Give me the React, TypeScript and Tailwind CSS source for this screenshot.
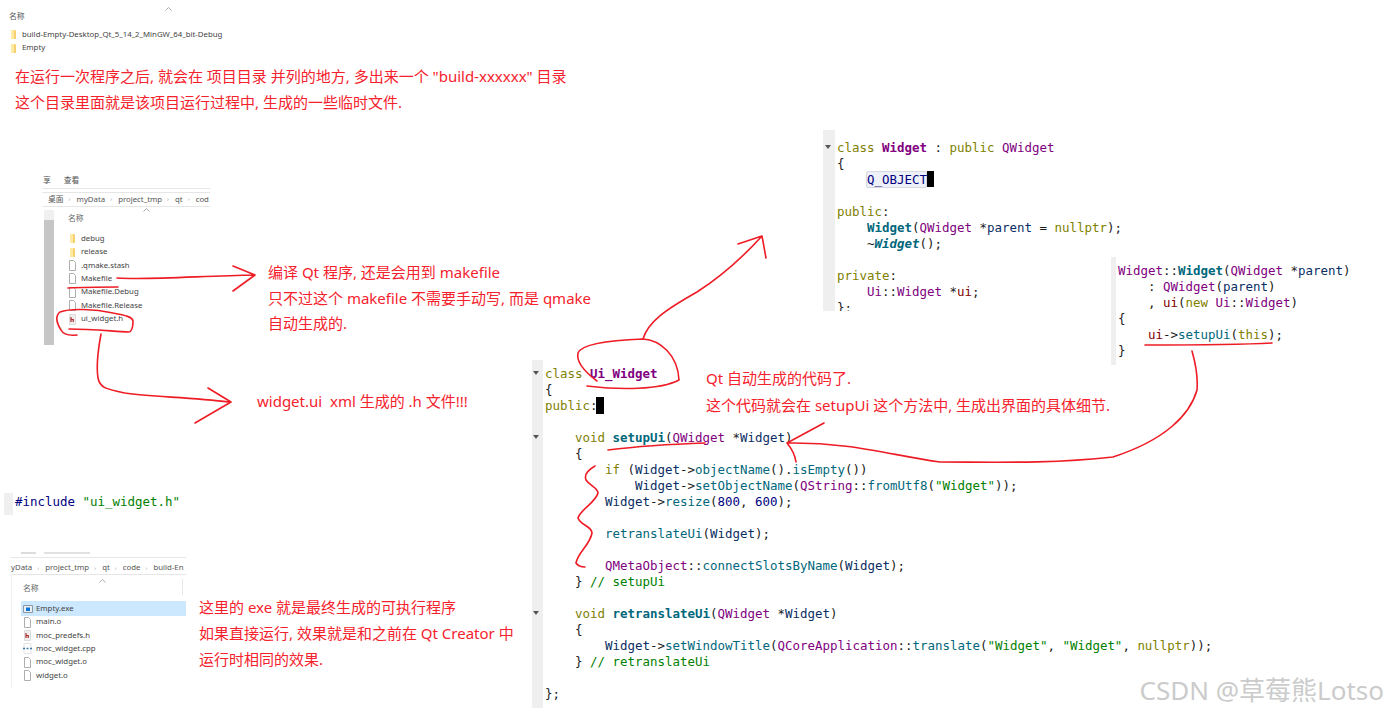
import React from "react";

type Kind = "p" | "kw" | "ty" | "tb" | "fn" | "fb" | "fi" | "v" | "m" | "s" | "c" | "n" | "d";
type Tok = [string, Kind];

const kindClass: Record<Kind, string> = {
  p: "text-[#1a1a1a]",
  kw: "text-[#808000]",
  ty: "text-[#800080]",
  tb: "text-[#800080] font-bold",
  fn: "text-[#00677c]",
  fb: "text-[#00677c] font-bold",
  fi: "text-[#00677c] font-bold italic",
  v: "text-[#092e64]",
  m: "text-[#800000]",
  s: "text-[#008000]",
  c: "text-[#008000]",
  n: "text-[#000080]",
  d: "text-[#000080]",
};

const headerCode: Tok[][] = [
  [["class ", "kw"], ["Widget", "tb"], [" : ", "p"], ["public ", "kw"], ["QWidget", "ty"]],
  [["{", "p"]],
  [["    ", "p"], ["Q_OBJECT", "d"]],
  [],
  [["public", "kw"], [":", "p"]],
  [["    ", "p"], ["Widget", "fb"], ["(", "p"], ["QWidget", "ty"], [" *", "p"], ["parent", "v"], [" = ", "p"], ["nullptr", "kw"], [");", "p"]],
  [["    ~", "p"], ["Widget", "fi"], ["();", "p"]],
  [],
  [["private", "kw"], [":", "p"]],
  [["    ", "p"], ["Ui", "ty"], ["::", "p"], ["Widget", "ty"], [" *", "p"], ["ui", "m"], [";", "p"]],
  [["};", "p"]],
];

const ctorCode: Tok[][] = [
  [["Widget", "ty"], ["::", "p"], ["Widget", "fb"], ["(", "p"], ["QWidget", "ty"], [" *", "p"], ["parent", "v"], [")", "p"]],
  [["    : ", "p"], ["QWidget", "ty"], ["(", "p"], ["parent", "v"], [")", "p"]],
  [["    , ", "p"], ["ui", "m"], ["(", "p"], ["new ", "kw"], ["Ui", "ty"], ["::", "p"], ["Widget", "ty"], [")", "p"]],
  [["{", "p"]],
  [["    ", "p"], ["ui", "m"], ["->", "p"], ["setupUi", "fn"], ["(", "p"], ["this", "kw"], [");", "p"]],
  [["}", "p"]],
];

const uiCode: Tok[][] = [
  [["class ", "kw"], ["Ui_Widget", "tb"]],
  [["{", "p"]],
  [["public", "kw"], [":", "p"]],
  [],
  [["    ", "p"], ["void ", "kw"], ["setupUi", "fb"], ["(", "p"], ["QWidget", "ty"], [" *", "p"], ["Widget", "v"], [")", "p"]],
  [["    {", "p"]],
  [["        ", "p"], ["if ", "kw"], ["(", "p"], ["Widget", "v"], ["->", "p"], ["objectName", "fn"], ["().", "p"], ["isEmpty", "fn"], ["())", "p"]],
  [["            ", "p"], ["Widget", "v"], ["->", "p"], ["setObjectName", "fn"], ["(", "p"], ["QString", "ty"], ["::", "p"], ["fromUtf8", "fn"], ["(", "p"], ["\"Widget\"", "s"], ["));", "p"]],
  [["        ", "p"], ["Widget", "v"], ["->", "p"], ["resize", "fn"], ["(", "p"], ["800", "n"], [", ", "p"], ["600", "n"], [");", "p"]],
  [],
  [["        ", "p"], ["retranslateUi", "fn"], ["(", "p"], ["Widget", "v"], [");", "p"]],
  [],
  [["        ", "p"], ["QMetaObject", "ty"], ["::", "p"], ["connectSlotsByName", "fn"], ["(", "p"], ["Widget", "v"], [");", "p"]],
  [["    } ", "p"], ["// setupUi", "c"]],
  [],
  [["    ", "p"], ["void ", "kw"], ["retranslateUi", "fb"], ["(", "p"], ["QWidget", "ty"], [" *", "p"], ["Widget", "v"], [")", "p"]],
  [["    {", "p"]],
  [["        ", "p"], ["Widget", "v"], ["->", "p"], ["setWindowTitle", "fn"], ["(", "p"], ["QCoreApplication", "ty"], ["::", "p"], ["translate", "fn"], ["(", "p"], ["\"Widget\"", "s"], [", ", "p"], ["\"Widget\"", "s"], [", ", "p"], ["nullptr", "kw"], ["));", "p"]],
  [["    } ", "p"], ["// retranslateUi", "c"]],
  [],
  [["};", "p"]],
];

function CodeLines({ lines }: { lines: Tok[][] }) {
  return (
    <div className="relative font-['DejaVu_Sans_Mono',monospace] text-[12.46px] leading-4 whitespace-pre">
      {lines.map((line, i) => (
        <div key={i} className="h-4">
          {line.map(([text, kind], j) => (
            <span key={j} className={kindClass[kind]}>
              {text}
            </span>
          ))}
        </div>
      ))}
    </div>
  );
}

function Fold() {
  return (
    <svg width="6" height="4" viewBox="0 0 6 4" className="absolute left-[1px]">
      <path d="M0 0h6L3 4z" fill="#555" />
    </svg>
  );
}

function FolderIcon() {
  return (
    <svg width="8" height="11" viewBox="0 0 8 11" className="shrink-0">
      <path d="M2 1h4l1 1v8H2z" fill="#f4d06f" />
      <path d="M2 1h3v9H2z" fill="#ffe9a3" />
    </svg>
  );
}

function FileIcon() {
  return (
    <svg width="8" height="11" viewBox="0 0 8 11" className="shrink-0">
      <path d="M1.500.5h4l2 2v8h-6z" fill="#fff" stroke="#aeaeae" />
    </svg>
  );
}

function HeaderIcon() {
  return (
    <svg width="8" height="11" viewBox="0 0 8 11" className="shrink-0">
      <path d="M1.500.5h6v10h-6z" fill="#f3efef" stroke="#dcdcdc" />
      <path d="M3 3v5M3 5.500h2.200V8" fill="none" stroke="#a8282c" strokeWidth="1.200" />
    </svg>
  );
}

function CppIcon() {
  return (
    <svg width="9" height="11" viewBox="0 0 9 11" className="shrink-0 -mr-px">
      <path d="M1 .5h7v10H1z" fill="#fff" stroke="#e4e4e4" />
      <path d="M0 5.500h2M3.500 5.500h2M7 5.500h2" stroke="#3d78b5" strokeWidth="1.600" />
    </svg>
  );
}

function ExeIcon() {
  return (
    <svg width="10" height="10" viewBox="0 0 10 10" className="shrink-0 -mr-[2px]">
      <path d="M.5 1.500h9v7h-9z" fill="#e9eef3" stroke="#8c98a4" />
      <path d="M3 3.500h4v3.500H3z" fill="#0a74d6" />
    </svg>
  );
}

function Row({ icon, name, selected }: { icon: React.ReactNode; name: string; selected?: boolean }) {
  return (
    <div
      className={`flex items-center gap-[5px] ${
        selected ? "bg-[#cce8ff] h-[15px] -my-[0.8px] -ml-[2px] pl-[2px]" : "h-[13.4px]"
      }`}
    >
      {icon}
      <span className="text-[7.8px] text-[#444] whitespace-nowrap">{name}</span>
    </div>
  );
}

function Chevron({ className }: { className: string }) {
  return (
    <svg width="7" height="4" viewBox="0 0 7 4" className={className}>
      <path d="M.5 3.500 3.500.5l3 3" fill="none" stroke="#aaa" />
    </svg>
  );
}

function Crumbs({ items }: { items: string[] }) {
  return (
    <div className="flex items-center gap-[5px] text-[7.8px] text-[#555] whitespace-nowrap">
      {items.map((item, i) => (
        <React.Fragment key={item}>
          {i > 0 && <span className="text-[#999] text-[6px] w-[3px]">›</span>}
          <span>{item}</span>
        </React.Fragment>
      ))}
    </div>
  );
}

function Note({ className, lines }: { className: string; lines: string[] }) {
  return (
    <div className={`absolute text-[#f5222d] text-[15px] whitespace-pre ${className}`}>
      {lines.map((l) => (
        <div key={l}>{l}</div>
      ))}
    </div>
  );
}

function Ink() {
  const strokes = [
    // Makefile arrow
    "M117 278C150 280 200 276 254 275M233 266L255 275L233 291",
    "M68 288C85 287 100 287 118 287",
    // ui_widget.h ring
    "M77 335C68 336 63 334 61 330C56 322 55 316 60 312C70 308 95 309 113 313C124 315 134 317 133 322C133 328 131 332 129 332C110 331 90 329 69 329",
    // arrow down to widget.ui note
    "M101 334C98 350 96 365 98 378C100 388 106 389 125 393C150 397 190 397 229 402M208 388L231 402L195 423",
    // ring round Ui_Widget
    "M597 381C585 372 576 362 578 353C582 343 615 340 643 339C660 340 678 355 679 380C660 390 620 390 587 386",
    // arrow up to class Widget
    "M643 339C648 322 665 310 697 292C722 276 742 258 762 236M738 244L762 236L766 258",
    // long curve back to setupUi
    "M1192 351C1196 365 1198 378 1197 390C1190 415 1165 440 1113 457C1050 464 990 462 940 462C890 455 850 442 787 443M824 423L787 443M787 443C792 449 795 455 796 462",
    "M1145 345C1185 345 1235 345 1272 343",
    "M608 450C640 446 675 444 705 443",
    // brace next to the generated body
    "M595 466C588 470 584 475 586 480C590 486 598 488 598 493C596 502 580 510 578 518C580 525 592 526 592 533C590 545 578 552 576 563C578 566 582 567 585 567",
  ];
  return (
    <svg width="1388" height="712" viewBox="0 0 1388 712" className="absolute left-0 top-0 pointer-events-none">
      {strokes.map((d) => (
        <path key={d} d={d} fill="none" stroke="#ee1c25" strokeWidth="1.600" strokeLinecap="round" strokeLinejoin="round" />
      ))}
    </svg>
  );
}

export default function App() {
  return (
    <div className="relative w-[1388px] h-[712px] bg-white overflow-hidden font-['Noto_Sans','Noto_Sans_CJK_SC',sans-serif]">
      {/* top explorer crop */}
      <div className="absolute left-[9px] top-[10px] w-[240px] text-[7.8px] text-[#555]">
        <div className="leading-3">名称</div>
        <Chevron className="absolute left-[156px] -top-[3px]" />
        <div className="flex flex-col mt-[6px]">
          <Row icon={<FolderIcon />} name="build-Empty-Desktop_Qt_5_14_2_MinGW_64_bit-Debug" />
          <Row icon={<FolderIcon />} name="Empty" />
        </div>
      </div>

      <Note
        className="left-[15px] top-[63px] leading-[26px]"
        lines={["在运行一次程序之后, 就会在 项目目录 并列的地方, 多出来一个 \"build-xxxxxx\" 目录", "这个目录里面就是该项目运行过程中, 生成的一些临时文件."]}
      />

      {/* explorer with Makefile */}
      <div className="absolute left-[42px] top-[174px] w-[168px] h-[170px]">
        <div className="flex gap-[13px] text-[7.8px] text-[#555] leading-3 pl-[1px]">
          <span>享</span>
          <span>查看</span>
        </div>
        <div className="mt-[2px] h-[5px] border-y border-[#e6e6e6]" />
        <div className="h-[14px] flex items-center border-b border-[#e6e6e6] pl-[6px] overflow-hidden">
          <Crumbs items={["桌面", "myData", "project_tmp", "qt", "cod"]} />
        </div>
        <div className="flex h-[138px]">
          <div className="w-[10px] ml-[2px] mt-[3px] flex flex-col">
            <div className="h-[10px] bg-[#f0f0f0]" />
            <div className="flex-1 bg-[#c6c6c6]" />
          </div>
          <div className="relative pl-[14px] pt-[5px] flex-1">
            <div className="text-[7.8px] text-[#666] leading-3">名称</div>
            <Chevron className="absolute left-[89px] top-[1px]" />
            <div className="mt-[8px] flex flex-col">
              <Row icon={<FolderIcon />} name="debug" />
              <Row icon={<FolderIcon />} name="release" />
              <Row icon={<FileIcon />} name=".qmake.stash" />
              <Row icon={<FileIcon />} name="Makefile" />
              <Row icon={<FileIcon />} name="Makefile.Debug" />
              <Row icon={<FileIcon />} name="Makefile.Release" />
              <Row icon={<HeaderIcon />} name="ui_widget.h" />
            </div>
          </div>
        </div>
      </div>

      <Note
        className="left-[268px] top-[260px] leading-[25.500px]"
        lines={["编译 Qt 程序, 还是会用到 makefile", "只不过这个 makefile 不需要手动写, 而是 qmake", "自动生成的."]}
      />
      <Note className="left-[257px] top-[388px] leading-[26px]" lines={["widget.ui  xml 生成的 .h 文件!!!"]} />

      {/* include line */}
      <div className="absolute left-[4px] top-[493px] flex h-[22px]">
        <div className="w-[9px] bg-[#efefef]" />
        <div className="pl-[2px] pt-[1px] font-['DejaVu_Sans_Mono',monospace] text-[12.46px] leading-4 whitespace-pre">
          <span className="text-[#000080]">#include </span>
          <span className="text-[#008000]">"ui_widget.h"</span>
        </div>
      </div>

      {/* explorer with exe */}
      <div className="absolute left-[11px] top-[548px] w-[175px] h-[140px] overflow-hidden">
        <div className="h-[10px] border-b border-[#e6e6e6] flex gap-[8px] pl-[10px] pt-[4px]">
          <div className="w-[15px] h-[2px] bg-[#dcdcdc]" />
          <div className="w-[46px] h-[2px] bg-[#e2e2e2]" />
        </div>
        <div className="h-[17px] flex items-center border-b border-[#e6e6e6] pt-[4px]">
          <Crumbs items={["yData", "project_tmp", "qt", "code", "build-En"]} />
        </div>
        <div className="relative h-[113px] border-l border-[#f0f0f0] pl-[10px] pt-[7px]">
          <div className="text-[7.8px] text-[#666] leading-3 pl-[1px]">名称</div>
          <Chevron className="absolute left-[87px] top-[4px]" />
          <div className="absolute left-[170px] top-[4px] w-px h-[16px] bg-[#e6e6e6]" />
          <div className="mt-[8px] pl-[1px] flex flex-col -mr-[2px]">
            <Row icon={<ExeIcon />} name="Empty.exe" selected />
            <Row icon={<FileIcon />} name="main.o" />
            <Row icon={<HeaderIcon />} name="moc_predefs.h" />
            <Row icon={<CppIcon />} name="moc_widget.cpp" />
            <Row icon={<FileIcon />} name="moc_widget.o" />
            <Row icon={<FileIcon />} name="widget.o" />
          </div>
        </div>
      </div>

      <Note
        className="left-[199px] top-[594px] leading-[26px]"
        lines={["这里的 exe 就是最终生成的可执行程序", "如果直接运行, 效果就是和之前在 Qt Creator 中", "运行时相同的效果."]}
      />

      {/* class Widget header */}
      <div className="absolute left-[823px] top-[130px] h-[181px] w-[300px] flex overflow-hidden">
        <div className="relative w-[12px] bg-[#efefef] shrink-0">
          <div className="absolute top-[15px] left-[1px]">
            <Fold />
          </div>
        </div>
        <div className="relative pl-[2px] pt-[10px]">
          <div className="absolute left-[31px] top-[41px] w-[61px] h-[17px] rounded-[2px] border border-[#d5d8e0] bg-[#eef1f8]" />
          <CodeLines lines={headerCode} />
          <div className="absolute left-[92px] top-[41px] w-[7px] h-[16px] bg-black" />
        </div>
      </div>

      {/* constructor */}
      <div className="absolute left-[1111px] top-[257px] h-[108px] w-[260px] flex bg-white">
        <div className="w-[5px] bg-[#efefef] shrink-0" />
        <div className="pl-[2px] pt-[6px]">
          <CodeLines lines={ctorCode} />
        </div>
      </div>

      {/* generated ui_widget.h */}
      <div className="absolute left-[532px] top-[360px] h-[348px] w-[700px] flex">
        <div className="relative w-[11px] bg-[#efefef] shrink-0">
          <div className="absolute top-[11px] left-0">
            <Fold />
          </div>
          <div className="absolute top-[75px] left-0">
            <Fold />
          </div>
          <div className="absolute top-[251px] left-0">
            <Fold />
          </div>
        </div>
        <div className="relative pl-[2px] pt-[6px]">
          <CodeLines lines={uiCode} />
          <div className="absolute left-[53px] top-[37px] w-[8px] h-[17px] bg-black" />
        </div>
      </div>

      <Note
        className="left-[706px] top-[365px] leading-[27px]"
        lines={["Qt 自动生成的代码了.", "这个代码就会在 setupUi 这个方法中, 生成出界面的具体细节."]}
      />

      <Ink />

      <div className="absolute right-[4px] top-[674px] text-[26px] leading-8 text-[#cbcbcb] whitespace-nowrap">
        CSDN @草莓熊Lotso
      </div>
    </div>
  );
}
